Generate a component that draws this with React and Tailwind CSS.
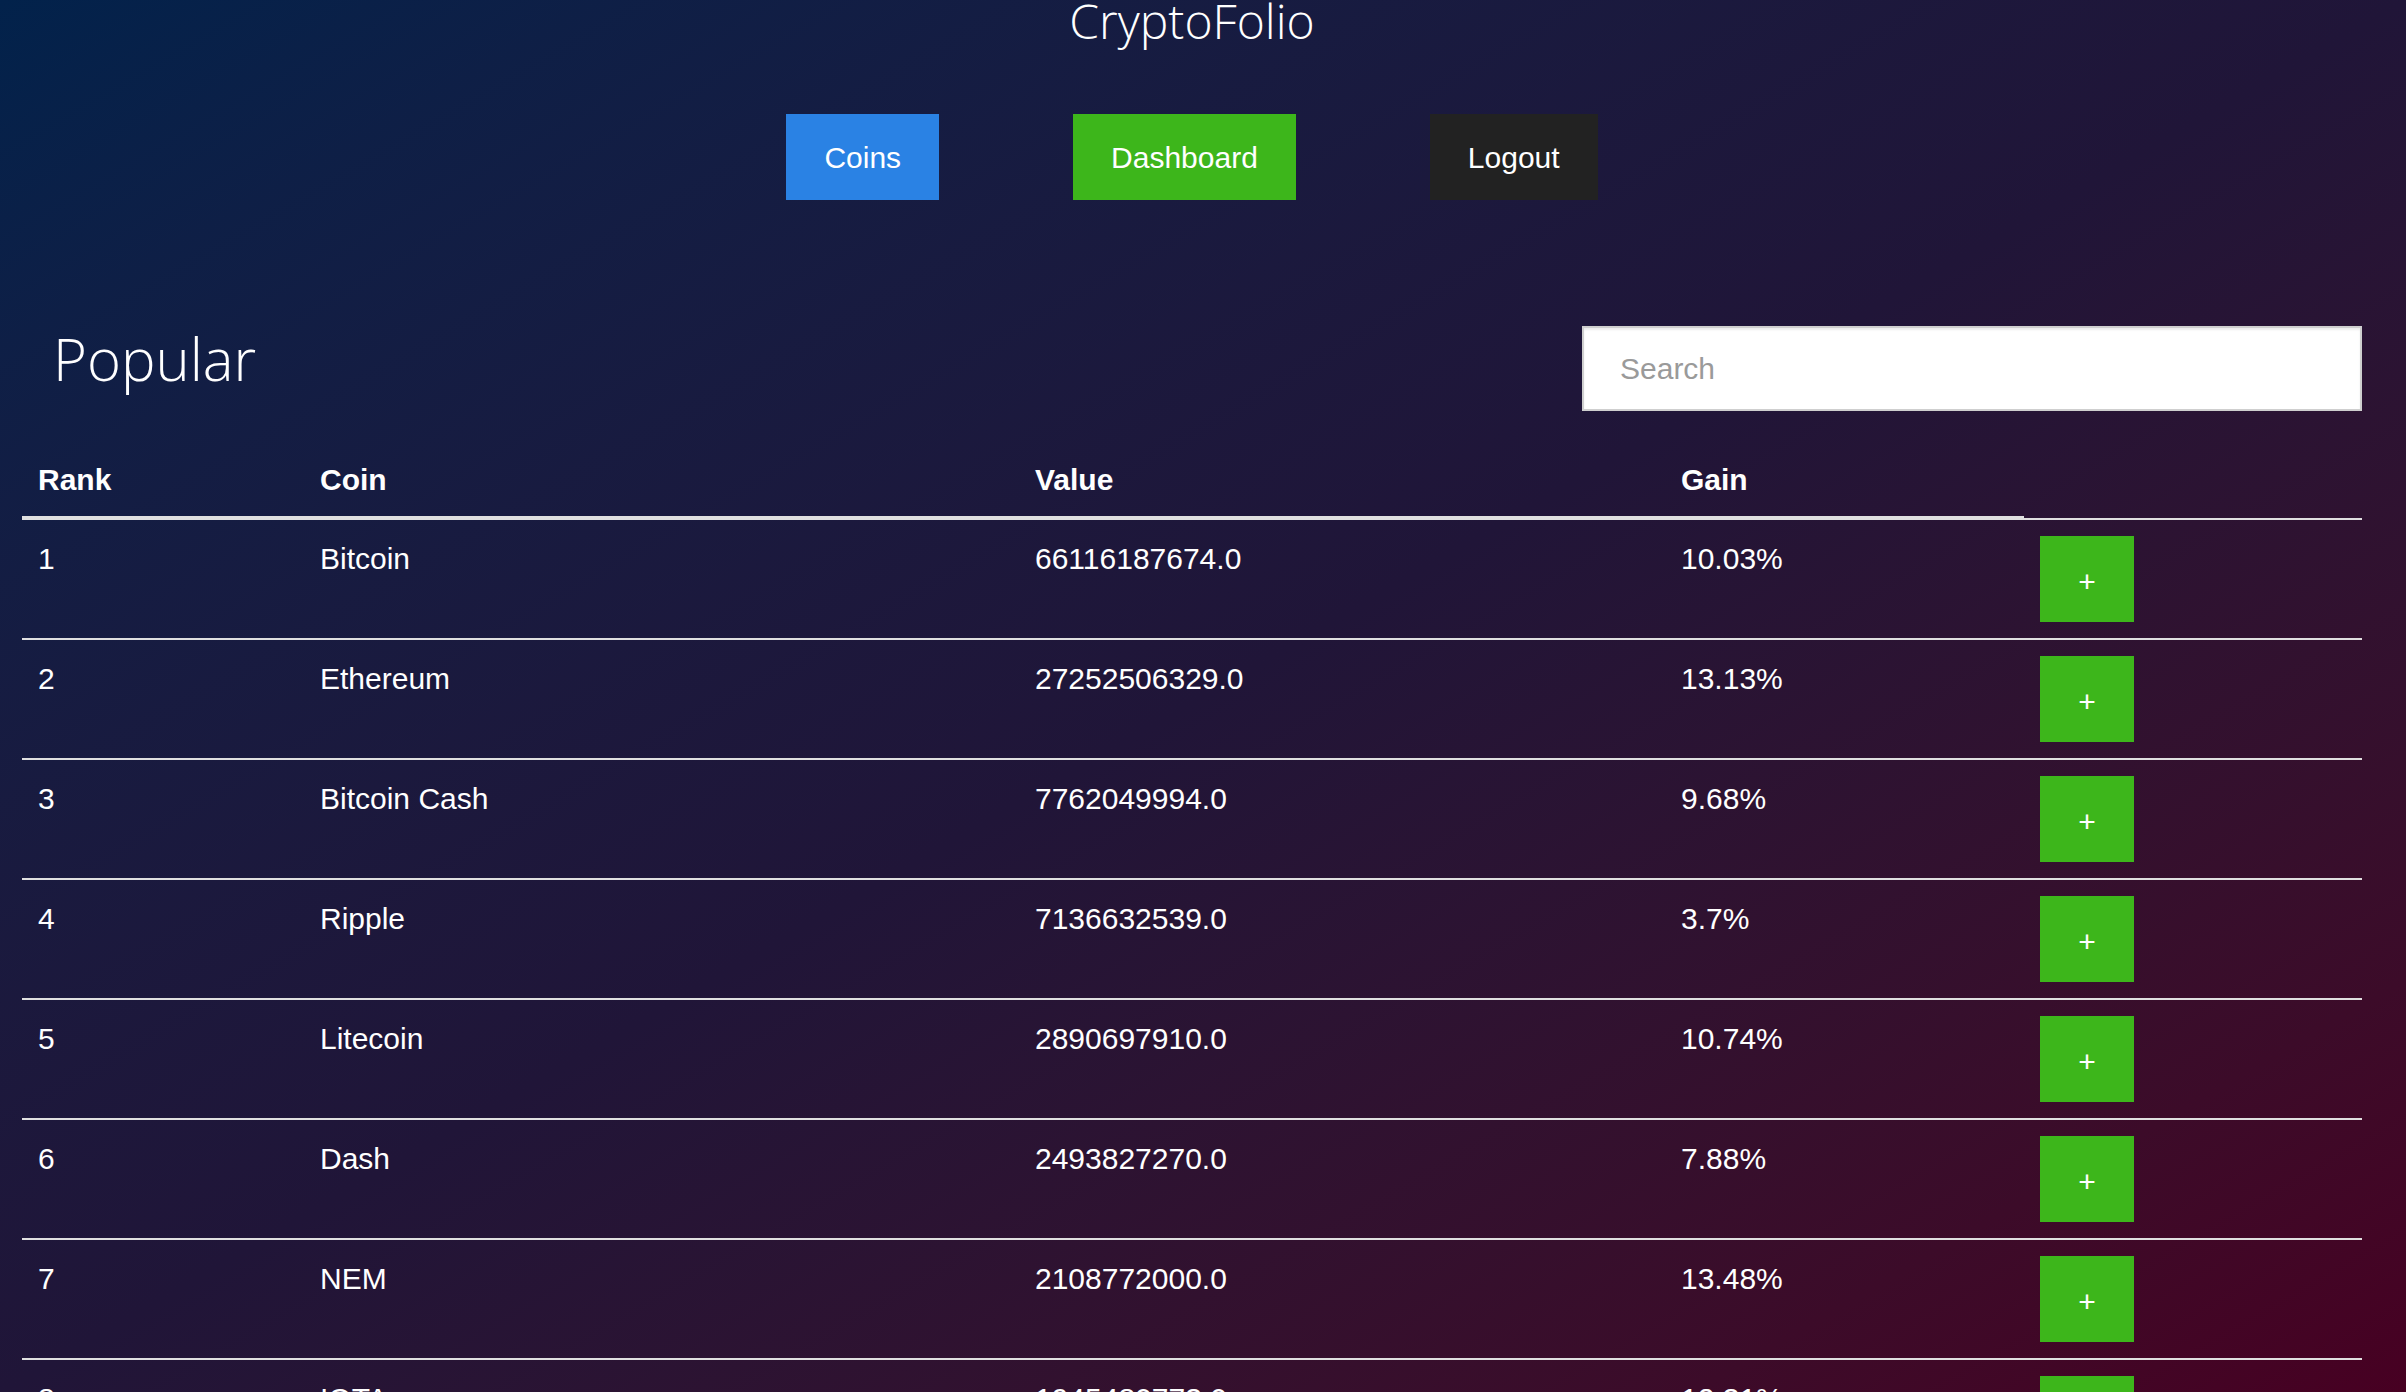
import React, { useState } from "react";

const coins = [
  { rank: 1, name: "Bitcoin", value: "66116187674.0", gain: "10.03%" },
  { rank: 2, name: "Ethereum", value: "27252506329.0", gain: "13.13%" },
  { rank: 3, name: "Bitcoin Cash", value: "7762049994.0", gain: "9.68%" },
  { rank: 4, name: "Ripple", value: "7136632539.0", gain: "3.7%" },
  { rank: 5, name: "Litecoin", value: "2890697910.0", gain: "10.74%" },
  { rank: 6, name: "Dash", value: "2493827270.0", gain: "7.88%" },
  { rank: 7, name: "NEM", value: "2108772000.0", gain: "13.48%" },
  { rank: 8, name: "IOTA", value: "1945480773.0", gain: "12.31%" },
];

const cols = "grid grid-cols-[282px_715px_646px_359px_338px]";

const App = () => {
  const [search, setSearch] = useState("");

  return (
    <div className="h-screen overflow-hidden bg-linear-to-br from-[#02224b] via-[#201538] to-[#470022] text-white font-['Liberation_Sans',Arial,sans-serif]">
      <div className="ml-[22px] w-[2340px]">
        <h1 className="mt-[-3px] text-center font-['Open_Sans',sans-serif] font-light text-[48px] leading-none">
          CryptoFolio
        </h1>

        <nav className="mt-[69px] flex justify-center gap-[134px]">
          <button className="h-[86px] px-[38px] bg-[#2a82e4] text-[30px]">Coins</button>
          <button className="h-[86px] px-[38px] bg-[#3db61b] text-[30px]">Dashboard</button>
          <button className="h-[86px] px-[38px] bg-[#222222] text-[30px]">Logout</button>
        </nav>

        <div className="mt-[126px] grid grid-cols-3 items-start">
          <div className="col-span-2 pl-[31px]">
            <h2 className="mt-[4px] font-['Open_Sans',sans-serif] font-light text-[58px] leading-none">
              Popular
            </h2>
          </div>
          <input
            type="text"
            placeholder="Search"
            value={search}
            onChange={(e) => setSearch(e.target.value)}
            className="h-[85px] w-full border-2 border-[#cfcfcf] bg-white pl-[36px] text-[30px] text-[#333] placeholder-[#9a9a9a] shadow-[inset_0_2px_2px_rgba(0,0,0,0.08)] outline-none"
          />
        </div>

        {/* table header */}
        <div className={`${cols} mt-[30px] border-b-2 border-[#e0e0e0] text-[30px] font-bold leading-[45px]`}>
          <div className="pl-[16px] pr-[15px] pt-[16px] pb-[14px] border-b-2 border-[#e0e0e0]">Rank</div>
          <div className="pl-[16px] pr-[15px] pt-[16px] pb-[14px] border-b-2 border-[#e0e0e0]">Coin</div>
          <div className="pl-[16px] pr-[15px] pt-[16px] pb-[14px] border-b-2 border-[#e0e0e0]">Value</div>
          <div className="pl-[16px] pr-[15px] pt-[16px] pb-[14px] border-b-2 border-[#e0e0e0]">Gain</div>
          <div></div>
        </div>

        {coins
          .filter((c) => c.name.toLowerCase().includes(search.toLowerCase()))
          .map((coin) => (
            <div
              key={coin.rank}
              className={`${cols} border-b-2 border-[#e0e0e0] text-[30px] leading-[45px]`}
            >
              <div className="pl-[16px] pr-[15px] py-[16px]">{coin.rank}</div>
              <div className="pl-[16px] pr-[15px] py-[16px]">{coin.name}</div>
              <div className="pl-[16px] pr-[15px] py-[16px]">{coin.value}</div>
              <div className="pl-[16px] pr-[15px] py-[16px]">{coin.gain}</div>
              <div className="px-[16px] py-[16px]">
                <button className="flex h-[86px] w-[94px] items-center justify-center bg-[#3db61b] pt-[5px] text-[30px] leading-none">
                  +
                </button>
              </div>
            </div>
          ))}
      </div>
    </div>
  );
};

export default App;
